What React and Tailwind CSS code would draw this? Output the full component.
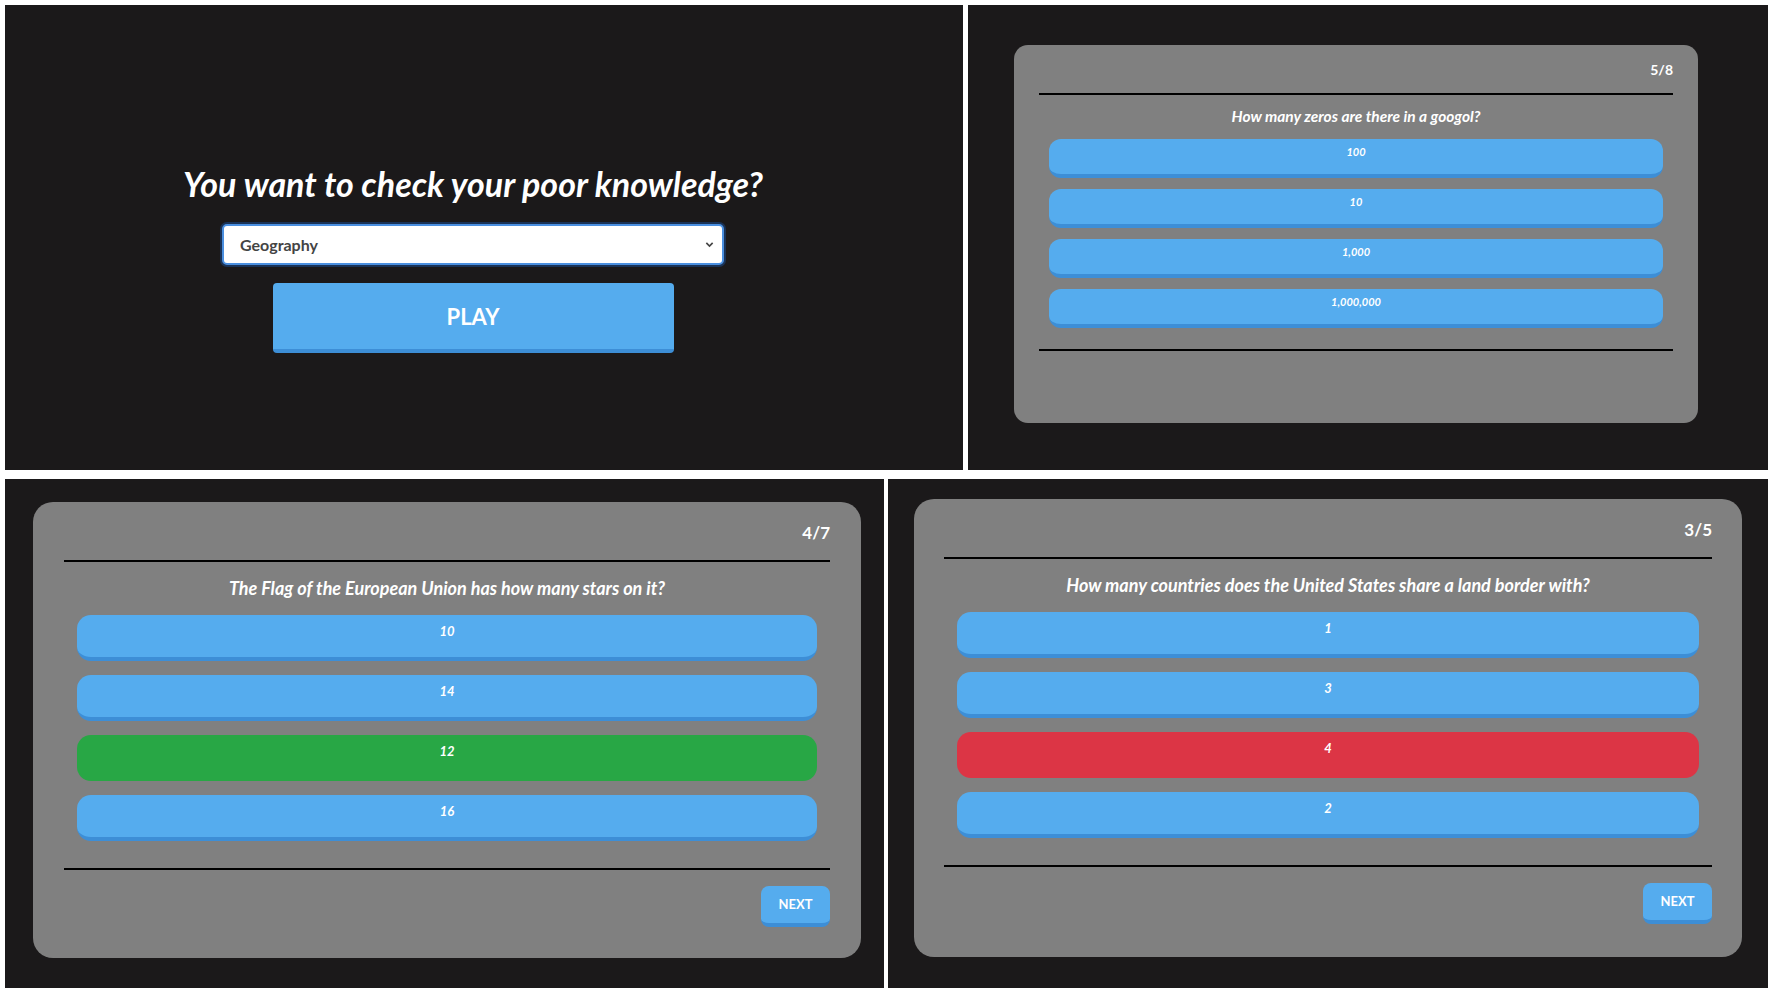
import { useState } from "react";

const font = "font-['Lato','Open_Sans',sans-serif]";

function Answer({ label, state, compact }) {
  // blue = idle, green = right pick, red = wrong pick
  const tone =
    state === "right"
      ? "bg-[#28a745]"
      : state === "wrong"
      ? "bg-[#dc3545]"
      : "bg-[#55acee] border-b-4 border-[#3d8ed6]";

  return (
    <button
      className={`flex w-full items-start justify-center font-bold italic text-white ${tone} ${
        compact
          ? "h-[39px] rounded-[12px] pt-[5px] text-[11px] leading-[15px]"
          : "h-[46px] rounded-[14px] pt-[7px] text-[13px] leading-[18px]"
      }`}
    >
      {label}
    </button>
  );
}

function QuizCard({ count, question, answers, compact, withNext, className }) {
  return (
    <div className={`flex flex-col bg-[#808080] ${className}`}>
      {/* COUNTER */}
      <div
        className={`text-right font-bold text-white ${
          compact ? "pt-[15px] text-[14px] leading-5" : "pt-[19px] text-[17px] leading-6"
        }`}
      >
        {count}
      </div>

      <div className={`h-[2px] bg-black ${compact ? "mt-[13px]" : "mt-[15px]"}`} />

      {/* QUESTION */}
      <p
        className={`text-center font-bold italic text-white ${
          compact ? "mt-[11px] text-[15.5px] leading-5" : "mt-[15px] text-[18px] leading-[22px]"
        }`}
      >
        {question}
      </p>

      {/* ANSWERS */}
      <div
        className={`flex flex-col ${
          compact ? "mt-[13px] gap-[11px] px-[10px]" : "mt-[16px] gap-[14px] px-[13px]"
        }`}
      >
        {answers.map((a) => (
          <Answer key={a.label} label={a.label} state={a.state} compact={compact} />
        ))}
      </div>

      <div className={`h-[2px] bg-black ${compact ? "mt-[21px]" : "mt-[27px]"}`} />

      {withNext && (
        <button className="mt-[16px] h-[41px] w-[69px] self-end rounded-[8px] border-b-4 border-[#3d8ed6] bg-[#55acee] text-[13px] font-bold text-white">
          NEXT
        </button>
      )}
    </div>
  );
}

function StartScreen() {
  const [topic, setTopic] = useState("Geography");

  return (
    <div className="flex h-[465px] w-[958px] flex-col items-center bg-[#1b191a] pr-[22px] pt-[159px]">
      <h1 className="text-[34px] font-bold italic leading-10 text-white">
        You want to check your poor knowledge?
      </h1>

      <div className="relative mt-[20px] w-[502px]">
        <select
          value={topic}
          onChange={(e) => setTopic(e.target.value)}
          className="h-[41px] w-full appearance-none rounded-[5px] border-2 border-[#4a8fe0] bg-white pl-[16px] text-[16px] font-bold text-[#444] outline-none ring-2 ring-[#1a3357]"
        >
          <option>Geography</option>
          <option>History</option>
          <option>Science</option>
        </select>
        <svg
          className="pointer-events-none absolute right-[10px] top-[16px] h-[9px] w-[9px]"
          viewBox="0 0 10 10"
          fill="none"
          stroke="#444"
          strokeWidth="1.8"
        >
          <path d="M1.5 3.2 L5 6.8 L8.5 3.2" />
        </svg>
      </div>

      <button className="mt-[18px] h-[70px] w-[401px] rounded-[4px] border-b-4 border-[#3d8ed6] bg-[#55acee] text-[22px] font-bold text-white">
        PLAY
      </button>
    </div>
  );
}

export default function App() {
  return (
    <div className={`flex h-[993px] w-[1773px] flex-col gap-[9px] bg-white p-[5px] ${font}`}>
      {/* TOP ROW */}
      <div className="flex gap-[5px]">
        <StartScreen />

        <div className="h-[465px] w-[800px] bg-[#1b191a] pl-[46px] pt-[40px]">
          <QuizCard
            compact
            className="h-[378px] w-[684px] rounded-[14px] px-[25px]"
            count="5/8"
            question="How many zeros are there in a googol?"
            answers={[
              { label: "100" },
              { label: "10" },
              { label: "1,000" },
              { label: "1,000,000" },
            ]}
          />
        </div>
      </div>

      {/* BOTTOM ROW */}
      <div className="flex gap-[4px]">
        <div className="h-[509px] w-[879px] bg-[#1b191a] pl-[28px] pt-[23px]">
          <QuizCard
            withNext
            className="h-[456px] w-[828px] rounded-[20px] px-[31px]"
            count="4/7"
            question="The Flag of the European Union has how many stars on it?"
            answers={[
              { label: "10" },
              { label: "14" },
              { label: "12", state: "right" },
              { label: "16" },
            ]}
          />
        </div>

        <div className="h-[509px] w-[880px] bg-[#1b191a] pl-[26px] pt-[20px]">
          <QuizCard
            withNext
            className="h-[458px] w-[828px] rounded-[20px] px-[30px]"
            count="3/5"
            question="How many countries does the United States share a land border with?"
            answers={[
              { label: "1" },
              { label: "3" },
              { label: "4", state: "wrong" },
              { label: "2" },
            ]}
          />
        </div>
      </div>
    </div>
  );
}
